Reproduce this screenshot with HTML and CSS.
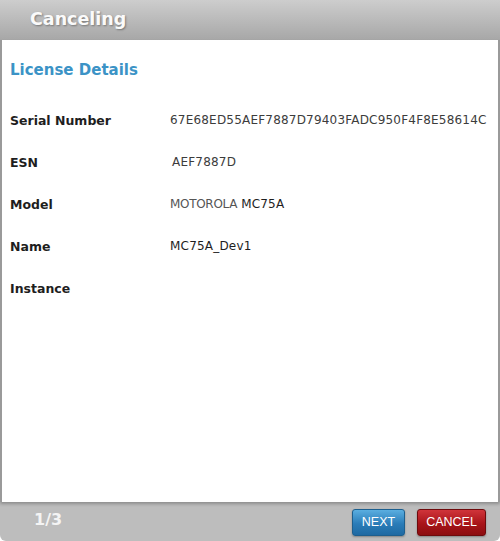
FILE: index.html
```html
<!DOCTYPE html>
<html lang="en">
<head>
  <meta charset="UTF-8" />
  <title>Canceling</title>
  <link rel="stylesheet" href="styles.css">
</head>
<body>
  <div class="dialog">
    <div class="dialog-header">
      <h1>Canceling</h1>
    </div>

    <div class="dialog-body">
      <h2>License Details</h2>
      <div class="details">
        <div class="row">
          <div class="label">Serial Number</div>
          <div class="value">67E68ED55AEF7887D79403FADC950F4F8E58614C</div>
        </div>
        <div class="row">
          <div class="label">ESN</div>
          <div class="value esn">AEF7887D</div>
        </div>
        <div class="row">
          <div class="label">Model</div>
          <div class="value"><span class="muted">MOTOROLA</span> <span class="dark">MC75A</span></div>
        </div>
        <div class="row">
          <div class="label">Name</div>
          <div class="value dark">MC75A_Dev1</div>
        </div>
        <div class="row">
          <div class="label">Instance</div>
          <div class="value"></div>
        </div>
      </div>
    </div>

    <div class="dialog-footer">
      <span class="pager">1/3</span>
      <div class="buttons">
        <button class="btn btn-next">NEXT</button>
        <button class="btn btn-cancel">CANCEL</button>
      </div>
    </div>
  </div>
</body>
</html>
```

FILE: styles.css
```css
html, body {
  margin: 0;
  padding: 0;
  background: #fff;
  font-family: 'DejaVu Sans', Verdana, sans-serif;
}

.dialog {
  width: 500px;
  height: 541px;
  display: flex;
  flex-direction: column;
  overflow: hidden;
}

.dialog-header {
  height: 40px;
  flex: none;
  background: linear-gradient(#cdcdcd, #a7a7a7);
  display: flex;
  align-items: center;
  padding-left: 30px;
}

.dialog-header h1 {
  margin: 0 0 3px 0;
  font-size: 17.5px;
  font-weight: bold;
  color: #fafafa;
  text-shadow: 1px 1px 2px rgba(0,0,0,0.35);
}

.dialog-body {
  flex: 1;
  background: #fff;
  border-left: 2px solid #9a9a9a;
  border-right: 2px solid #9a9a9a;
  padding: 20px 8px 0 8px;
  box-shadow: 0 2px 3px rgba(0,0,0,0.25);
  position: relative;
  z-index: 1;
}

.dialog-body h2 {
  margin: 0 0 31px 0;
  font-size: 15px;
  font-weight: bold;
  color: #3b93c6;
  line-height: 20px;
}

.details {
  display: flex;
  flex-direction: column;
  gap: 24px;
}

.row {
  display: flex;
  align-items: center;
  height: 18px;
}

.label {
  width: 160px;
  font-size: 12.5px;
  font-weight: bold;
  color: #1e1e1e;
}

.value {
  font-size: 12px;
  color: #3c3c3c;
  letter-spacing: 0.2px;
}

.value.esn {
  margin-left: 2px;
}

.value .muted {
  color: #555;
  letter-spacing: -0.3px;
}

.value .dark,
.value.dark {
  color: #1e1e1e;
}

.dialog-footer {
  height: 39px;
  flex: none;
  background: #bdbdbd;
  border-radius: 0 0 6px 6px;
  display: flex;
  align-items: center;
  justify-content: space-between;
  padding: 0 14px 0 34px;
}

.pager {
  font-size: 16px;
  font-weight: bold;
  color: #f4f4f4;
  margin-bottom: 4px;
}

.buttons {
  display: flex;
  gap: 12px;
  margin-top: 1px;
}

.btn {
  height: 27px;
  border-radius: 3px;
  font-family: 'Liberation Sans', Arial, sans-serif;
  font-size: 12.5px;
  color: #fff;
  padding: 0;
  cursor: pointer;
  box-shadow: 0 1px 2px rgba(0,0,0,0.3);
}

.btn-next {
  width: 53px;
  border: 1px solid #1d5f8e;
  background: linear-gradient(#5aaee0, #2a7cb8 55%, #1f6aa2);
}

.btn-cancel {
  width: 69px;
  border: 1px solid #6e0a0c;
  background: linear-gradient(#d0343a, #a81419 55%, #8c0d10);
}
```
